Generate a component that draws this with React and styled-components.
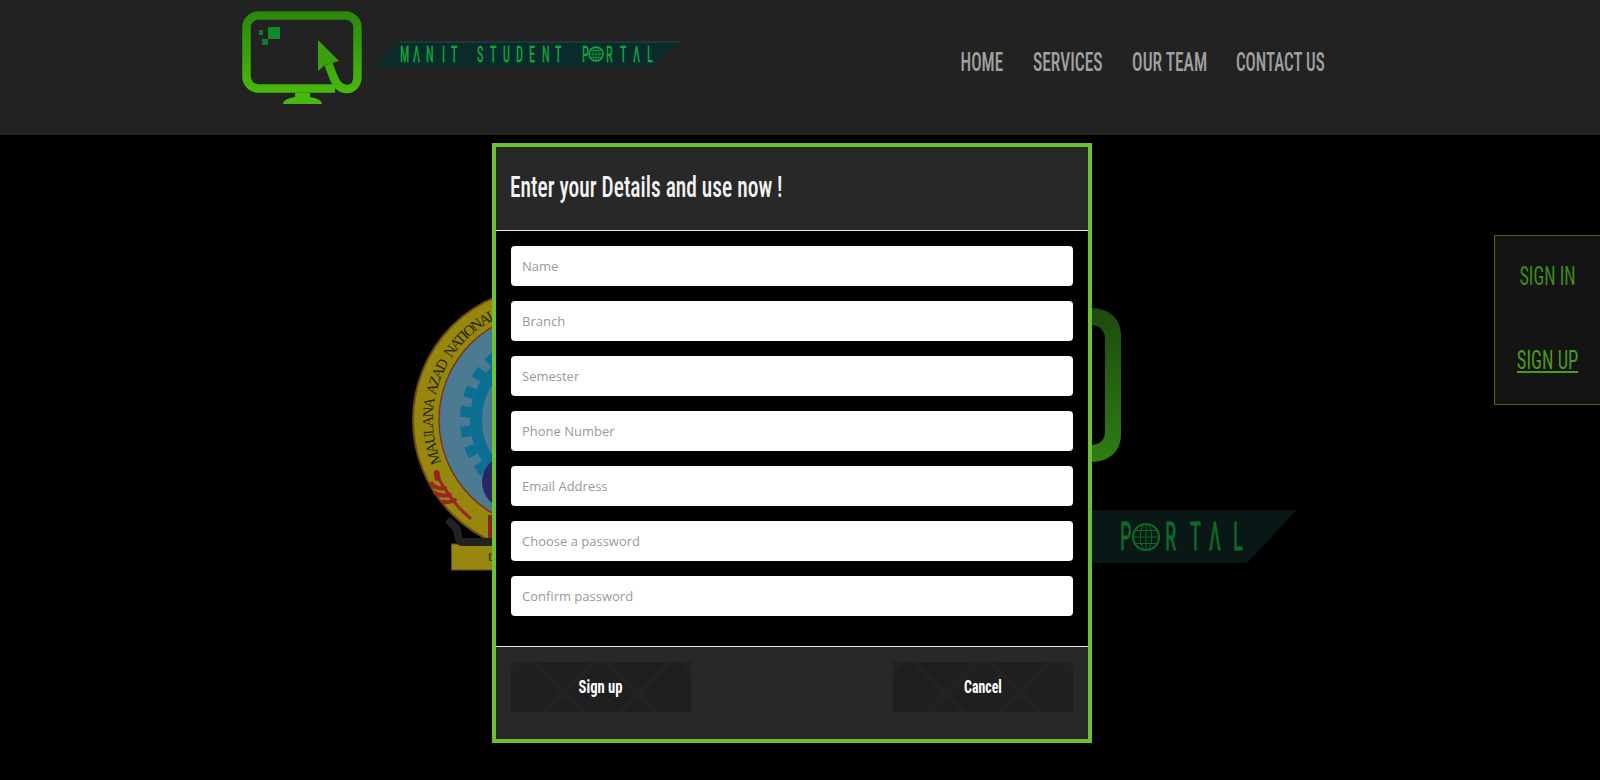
import React from 'react'
import styled, { createGlobalStyle } from 'styled-components'

const NARROW = `"Roboto Condensed", "Liberation Sans", sans-serif`
const LOGO_FONT = 'Roboto Condensed, Liberation Sans, sans-serif'

const navItems = [
    { text: 'HOME', width: 43, squeeze: 0.69 },
    { text: 'SERVICES', width: 70, squeeze: 0.7 },
    { text: 'OUR TEAM', width: 74, squeeze: 0.7 },
    { text: 'CONTACT US', width: 87, squeeze: 0.68 },
]
const fields = ['Name', 'Branch', 'Semester', 'Phone Number', 'Email Address', 'Choose a password', 'Confirm password']

const headerLetters = [
    ['M', 162], ['Λ', 175], ['N', 188], ['I', 204], ['T', 213],
    ['S', 239], ['T', 252], ['U', 265], ['D', 278], ['E', 291], ['N', 304], ['T', 317],
    ['P', 344], ['R', 368], ['T', 382], ['Λ', 395], ['L', 409],
]
const backdropLetters = [['P', 710], ['R', 755], ['T', 780], ['Λ', 799], ['L', 823]]

const GlobalStyle = createGlobalStyle`
    html, body {
        margin: 0;
        height: 100%;
        background: #000;
        overflow: hidden;
    }
`

/*--Drawings--*/
const LogoLetters = ({ letters, y, size, squeeze, fill, weight }) => (
    <g fontFamily={LOGO_FONT} fontSize={size} fill={fill} stroke={fill} strokeWidth={weight}>
        {letters.map(([letter, x], i) => (
            <text key={i} transform={`translate(${x} ${y}) scale(${squeeze} 1)`}>{letter}</text>
        ))}
    </g>
)

const Globe = ({ cx, cy, r, color, width }) => (
    <g fill="none" stroke={color}>
        <circle cx={cx} cy={cy} r={r} strokeWidth={width} />
        <ellipse cx={cx} cy={cy} rx={r * 0.45} ry={r} strokeWidth={width / 2} />
        <path d={`M${cx - r} ${cy}h${r * 2}M${cx} ${cy - r}v${r * 2}M${cx - r * 0.85} ${cy - r * 0.5}h${r * 1.7}M${cx - r * 0.85} ${cy + r * 0.5}h${r * 1.7}`} strokeWidth={width / 2} />
    </g>
)

const HeaderLogo = () => (
    <svg width="450" height="110" viewBox="0 0 450 110">
        <defs>
            <linearGradient id="monitorGreen" gradientUnits="userSpaceOnUse" x1="0" y1="11" x2="0" y2="104">
                <stop offset="0" stopColor="#2a860c" />
                <stop offset="1" stopColor="#4cc00f" />
            </linearGradient>
        </defs>
        <path
            d="M97 88.500H20.500a12 12 0 0 1-12-12V27.500a12 12 0 0 1 12-12H107.500a12 12 0 0 1 12 12V76C119.500 84 115 89 109 89 101 89 98 83 95 76L90.500 64"
            fill="none"
            stroke="url(#monitorGreen)"
            strokeWidth="8.500"
        />
        <path d="M57 93h15v4c3 1 11 1 12 7H45c1-6 9-6 12-7z" fill="#46b80e" />
        <rect x="30" y="27" width="12" height="12" fill="#0f8a2a" />
        <rect x="21" y="30" width="4" height="5" fill="#0f7a28" />
        <rect x="24" y="39" width="6" height="6" fill="#0f7a28" />
        <path d="M80 40L101 61 87 65 80 71z" fill="#3aa00f" />
        <path d="M134 67L162 42H442L414 67z" fill="#0b2a2c" />
        <path d="M162 42H442" stroke="#20494c" />
        <LogoLetters letters={headerLetters} y={62} size={22.5} squeeze={0.55} fill="#0fae38" weight={0.4} />
        <Globe cx={358} cy={54} r={7} color="#0fae38" width={1.5} />
    </svg>
)

const BackdropArt = () => (
    <svg width="900" height="290" viewBox="0 0 900 290">
        <defs>
            <linearGradient id="dimGreen" x1="0" y1="0" x2="0" y2="1">
                <stop offset="0" stopColor="#1d4a10" />
                <stop offset="1" stopColor="#2f7d12" />
            </linearGradient>
            <path id="sealArc" d="M31.300 172.700A113 113 0 0 1 137 17" />
        </defs>
        <circle cx="136" cy="130" r="133" fill="#98870f" stroke="#6d4a12" strokeWidth="2" />
        <circle cx="137" cy="130" r="108" fill="#4c7a92" stroke="#7a3a1a" strokeWidth="1.500" />
        <circle cx="137" cy="130" r="71" fill="none" stroke="#0b6f94" strokeWidth="12" />
        <circle cx="137" cy="130" r="82" fill="none" stroke="#0b6f94" strokeWidth="10" strokeDasharray="11 9" />
        <circle cx="99" cy="192" r="27" fill="#2b2566" />
        <text fontFamily="Liberation Serif, serif" fontSize="15" fill="#2a250a" wordSpacing="4">
            <textPath href="#sealArc" textLength="172" lengthAdjust="spacing">MAULANA AZAD NATIONAL</textPath>
        </text>
        <g fill="none" stroke="#9a2420" strokeLinecap="round">
            <path d="M28 187C32 196 36 200 38 203 42 210 47 217 60 228" strokeWidth="3" />
            <path d="M26.700 183L27.500 188" strokeWidth="6" />
            <path d="M21.700 193.300C25 198 30 199 35 198M25 202.700C29 206 35 206 40 205M33 211.700C37 213 41 212 45 210" strokeWidth="4" />
        </g>
        <rect x="78" y="225" width="5" height="27" fill="#8b2020" />
        <rect x="41.500" y="254" width="50" height="26" fill="#98870f" stroke="#5c5208" />
        <path d="M40 232c2 2 7 6 7 8 1 5 2 12 5 12h28" stroke="#222" strokeWidth="8" fill="none" strokeLinecap="round" />
        <text x="78" y="271" fontFamily="Liberation Serif, serif" fontSize="15" fill="#2a250a">t</text>
        <path d="M650 18h30c21 0 31 12 31 28v98c0 16-10 28-31 28h-30z" fill="url(#dimGreen)" />
        <path d="M650 35h30c10 0 15 6 15 14v92c0 9-5 14-15 14h-30z" fill="#000" />
        <path d="M650 220h237l-50 53H650z" fill="#0a1717" />
        <LogoLetters letters={backdropLetters} y={260} size={38} squeeze={0.55} fill="#0c6b26" weight={0.8} />
        <Globe cx={736} cy={247} r={13} color="#0c6b26" width={2} />
    </svg>
)

const App = () => {
    return (
        <Page>
            <GlobalStyle />
            <Header>
                <LogoWrapper><HeaderLogo /></LogoWrapper>
                <Nav>
                    {navItems.map(item => (
                        <NavLink key={item.text} $width={item.width}>
                            <Squeeze $x={item.squeeze}>{item.text}</Squeeze>
                        </NavLink>
                    ))}
                </Nav>
            </Header>

            <Backdrop><BackdropArt /></Backdrop>

            <SidePanel>
                <SideLink><Squeeze $x={0.73}>SIGN IN</Squeeze></SideLink>
                <SideLink $underlined><Squeeze $x={0.74}>SIGN UP</Squeeze></SideLink>
            </SidePanel>

            <Modal>
                <ModalHeader>
                    <Title>Enter your Details and use now !</Title>
                </ModalHeader>
                <ModalBody>
                    {fields.map(field => (
                        <Field key={field} placeholder={field} />
                    ))}
                </ModalBody>
                <ModalFooter>
                    <PatternButton><Squeeze $x={0.77}>Sign up</Squeeze></PatternButton>
                    <PatternButton><Squeeze $x={0.73}>Cancel</Squeeze></PatternButton>
                </ModalFooter>
            </Modal>
        </Page>
    )
}

export default App

const Page = styled.div`
    position: relative;
    height: 780px;
    background: #000;
    overflow: hidden;
`

const Squeeze = styled.span`
    display: inline-block;
    white-space: nowrap;
    transform: scaleX(${props => props.$x});
`

const Header = styled.header`
    display: flex;
    justify-content: space-between;
    height: 135px;
    padding: 0 276px 0 238px;
    background: #222;
`

const LogoWrapper = styled.div`
    height: 110px;
`

const Nav = styled.nav`
    display: flex;
    gap: 30px;
    padding-top: 48px;
`

const NavLink = styled.a`
    display: flex;
    justify-content: center;
    width: ${props => props.$width}px;
    font-family: ${NARROW};
    font-weight: 500;
    font-size: 25px;
    line-height: 30px;
    color: #a0a0a0;
`

const Backdrop = styled.div`
    position: absolute;
    left: 410px;
    top: 290px;
`

const SidePanel = styled.aside`
    position: absolute;
    right: 0;
    top: 235px;
    box-sizing: border-box;
    width: 106px;
    height: 170px;
    display: flex;
    flex-direction: column;
    align-items: center;
    gap: 54px;
    padding-top: 26px;
    background: #141414;
    border: 1px solid #3f6d24;
    border-right: 0;
`

const SideLink = styled.a`
    font-family: ${NARROW};
    font-size: 25px;
    line-height: 30px;
    color: ${props => (props.$underlined ? '#4c9a1c' : '#3f8a1a')};

    ${Squeeze} {
        text-decoration: ${props => (props.$underlined ? 'underline' : 'none')};
    }
`

const Modal = styled.div`
    position: absolute;
    left: 492px;
    top: 143px;
    box-sizing: border-box;
    width: 600px;
    height: 600px;
    display: flex;
    flex-direction: column;
    border: 4px solid #6ac232;
`

const ModalHeader = styled.div`
    display: flex;
    align-items: center;
    height: 84px;
    box-sizing: border-box;
    padding: 0 14px 4px;
    background: #282828;
    border-bottom: 1px solid #e8e8e8;
`

const Title = styled.h4`
    margin: 0;
    font-family: ${NARROW};
    font-weight: 500;
    font-size: 30px;
    white-space: nowrap;
    color: #f4f4f4;
    transform: scaleX(0.715);
    transform-origin: left center;
`

const ModalBody = styled.div`
    flex: 1;
    display: flex;
    flex-direction: column;
    gap: 15px;
    padding: 15px;
    background: #000;
`

const Field = styled.input`
    box-sizing: border-box;
    height: 40px;
    flex: none;
    padding: 0 11px;
    border: 0;
    border-radius: 4px;
    background: #fff;
    font-family: "Open Sans", sans-serif;
    font-size: 13px;

    &::placeholder {
        color: #999;
    }
`

const ModalFooter = styled.div`
    display: flex;
    justify-content: space-between;
    height: 93px;
    box-sizing: border-box;
    padding: 15px;
    background: #282828;
    border-top: 1px solid #e8e8e8;
`

const PatternButton = styled.button`
    display: flex;
    align-items: center;
    justify-content: center;
    width: 180px;
    height: 50px;
    padding: 0 0 2px;
    border: 0;
    font-family: ${NARROW};
    font-weight: 700;
    font-size: 19px;
    color: #fff;
    background-color: #1f1f1f;
    background-image:
        repeating-linear-gradient(45deg, transparent 0 46px, #232323 51px 52px, transparent 53px),
        repeating-linear-gradient(-45deg, transparent 0 46px, #232323 51px 52px, transparent 53px);
`
